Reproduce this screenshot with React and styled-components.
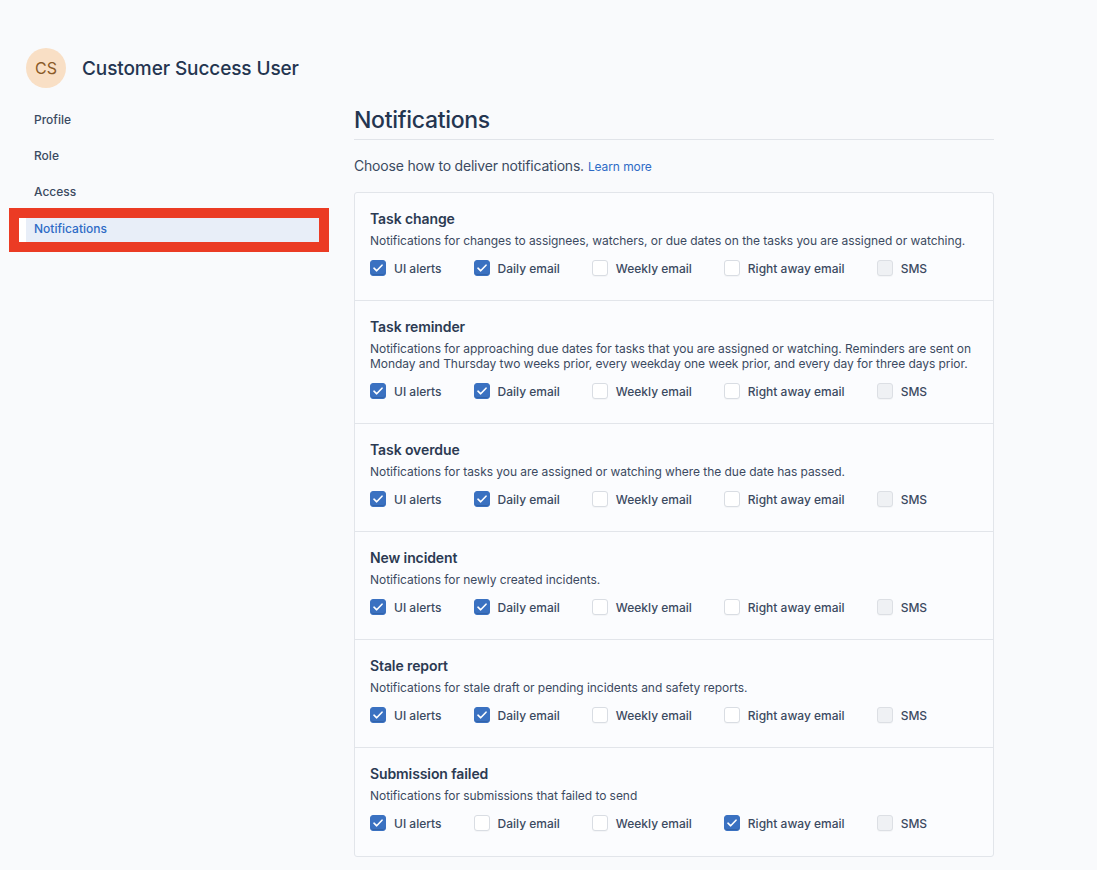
import React, { useState } from "react";
import styled, { createGlobalStyle } from "styled-components";

const GlobalStyle = createGlobalStyle`
  html, body {
    margin: 0;
    padding: 0;
    background: #f9fafc;
    font-family: Inter, "Liberation Sans", Arial, sans-serif;
    color: #2b3a52;
  }
`;

const Page = styled.div`
  display: flex;
  flex-direction: column;
  padding: 48px 0 14px 0;
  min-height: 870px;
  box-sizing: border-box;
`;

const Header = styled.div`
  display: flex;
  align-items: center;
  gap: 16px;
  padding-left: 26px;
  height: 40px;
`;

const Avatar = styled.div`
  width: 40px;
  height: 40px;
  border-radius: 50%;
  background: #f9dfc5;
  color: #8b5a28;
  display: flex;
  align-items: center;
  justify-content: center;
  font-size: 16px;
  font-weight: 400;
`;

const UserName = styled.h1`
  margin: 0;
  font-size: 19px;
  font-weight: 500;
  color: #243550;
  letter-spacing: -0.1px;
`;

const Body = styled.div`
  display: flex;
  align-items: flex-start;
`;

const Sidebar = styled.nav`
  width: 354px;
  flex-shrink: 0;
  display: flex;
  flex-direction: column;
  padding-top: 15px;
  padding-left: 9px;
  box-sizing: border-box;
`;

const NavWrap = styled.div`
  width: 320px;
  box-sizing: border-box;
  border: 10px solid ${(p) => (p.highlight ? "#eb3b24" : "transparent")};
  height: ${(p) => (p.highlight ? "44px" : "36px")};
  margin-top: ${(p) => (p.highlight ? "-3px" : "0")};
  display: flex;
  align-items: center;
`;

const NavItem = styled.a`
  display: block;
  width: 100%;
  height: 24px;
  line-height: 22px;
  box-sizing: border-box;
  padding-left: 8px;
  font-size: 12px;
  font-weight: 500;
  color: ${(p) => (p.active ? "#2e6bc6" : "#3b4a61")};
  background: ${(p) => (p.active ? "#e8eef8" : "transparent")};
  border-left: 7px solid ${(p) => (p.active ? "#ffffff" : "transparent")};
  text-decoration: none;
  cursor: pointer;
`;

const Main = styled.main`
  width: 640px;
  padding-top: 13px;
  display: flex;
  flex-direction: column;
`;

const Title = styled.h2`
  margin: 0;
  font-size: 23px;
  font-weight: 500;
  color: #243550;
  line-height: 32px;
  padding-top: 3px;
  padding-bottom: 3px;
  border-bottom: 1px solid #e1e4e9;
  letter-spacing: -0.3px;
`;

const Intro = styled.p`
  margin: 0;
  padding: 16px 0 15px;
  font-size: 14px;
  line-height: 20px;
  color: #3b4a61;
  letter-spacing: -0.2px;
`;

const Link = styled.a`
  font-size: 12px;
  color: #2e6bc6;
  text-decoration: none;
  margin-left: 4px;
  letter-spacing: -0.1px;
`;

const Card = styled.div`
  border: 1px solid #e2e5ea;
  border-radius: 3px;
  background: #fbfcfe;
`;

const Section = styled.section`
  padding: 16px 15px 22px;
  border-top: ${(p) => (p.first ? "none" : "1px solid #e2e5ea")};
  &:last-child {
    padding-bottom: 23px;
  }
`;

const SectionTitle = styled.h3`
  margin: 0 0 4px;
  font-size: 14px;
  line-height: 20px;
  font-weight: 600;
  color: #2b3a52;
  letter-spacing: -0.1px;
`;

const Desc = styled.p`
  margin: 0 0 10px;
  font-size: 12px;
  line-height: 15px;
  color: #3b4a61;
  letter-spacing: -0.05px;
`;

const Options = styled.div`
  display: flex;
  align-items: center;
  gap: 32px;
  height: 20px;
`;

const Option = styled.label`
  display: flex;
  align-items: center;
  gap: 8px;
  font-size: 12px;
  font-weight: 500;
  color: #3b4a61;
  cursor: ${(p) => (p.disabled ? "default" : "pointer")};
`;

const Box = styled.span`
  width: 16px;
  height: 16px;
  box-sizing: border-box;
  border-radius: 3px;
  display: flex;
  align-items: center;
  justify-content: center;
  background: ${(p) =>
    p.checked ? "#3a71c1" : p.disabled ? "#eff1f4" : "#ffffff"};
  border: 1px solid
    ${(p) => (p.checked ? "#3a71c1" : p.disabled ? "#dcdfe4" : "#d9dde3")};
  box-shadow: ${(p) =>
    p.checked ? "inset 0 -1px 0 rgba(0,0,0,0.12)" : "0 1px 1px rgba(0,0,0,0.03)"};
`;

const channels = ["UI alerts", "Daily email", "Weekly email", "Right away email", "SMS"];

const initial = [
  {
    title: "Task change",
    desc: "Notifications for changes to assignees, watchers, or due dates on the tasks you are assigned or watching.",
    on: [true, true, false, false, false],
  },
  {
    title: "Task reminder",
    desc: "Notifications for approaching due dates for tasks that you are assigned or watching. Reminders are sent on Monday and Thursday two weeks prior, every weekday one week prior, and every day for three days prior.",
    on: [true, true, false, false, false],
  },
  {
    title: "Task overdue",
    desc: "Notifications for tasks you are assigned or watching where the due date has passed.",
    on: [true, true, false, false, false],
  },
  {
    title: "New incident",
    desc: "Notifications for newly created incidents.",
    on: [true, true, false, false, false],
  },
  {
    title: "Stale report",
    desc: "Notifications for stale draft or pending incidents and safety reports.",
    on: [true, true, false, false, false],
  },
  {
    title: "Submission failed",
    desc: "Notifications for submissions that failed to send",
    on: [true, false, false, true, false],
  },
];

const Check = () => (
  <svg width="10" height="8" viewBox="0 0 10 8" fill="none">
    <path
      d="M1 4.2L3.7 6.8L9 1.2"
      stroke="#ffffff"
      strokeWidth="1.6"
      strokeLinecap="round"
      strokeLinejoin="round"
    />
  </svg>
);

const navItems = ["Profile", "Role", "Access", "Notifications"];

export default function App() {
  const [rows, setRows] = useState(initial);

  const toggle = (ri, ci) => {
    if (ci === 4) return;
    setRows((r) =>
      r.map((row, i) =>
        i === ri
          ? { ...row, on: row.on.map((v, j) => (j === ci ? !v : v)) }
          : row
      )
    );
  };

  return (
    <>
      <GlobalStyle />
      <Page>
        <Header>
          <Avatar>CS</Avatar>
          <UserName>Customer Success User</UserName>
        </Header>
        <Body>
          <Sidebar>
            {navItems.map((n) => (
              <NavWrap key={n} highlight={n === "Notifications"}>
                <NavItem active={n === "Notifications"}>{n}</NavItem>
              </NavWrap>
            ))}
          </Sidebar>
          <Main>
            <Title>Notifications</Title>
            <Intro>
              Choose how to deliver notifications.
              <Link>Learn more</Link>
            </Intro>
            <Card>
              {rows.map((row, ri) => (
                <Section key={row.title} first={ri === 0}>
                  <SectionTitle>{row.title}</SectionTitle>
                  <Desc>{row.desc}</Desc>
                  <Options>
                    {channels.map((c, ci) => (
                      <Option
                        key={c}
                        disabled={ci === 4}
                        onClick={() => toggle(ri, ci)}
                      >
                        <Box checked={row.on[ci]} disabled={ci === 4}>
                          {row.on[ci] && <Check />}
                        </Box>
                        {c}
                      </Option>
                    ))}
                  </Options>
                </Section>
              ))}
            </Card>
          </Main>
        </Body>
      </Page>
    </>
  );
}
